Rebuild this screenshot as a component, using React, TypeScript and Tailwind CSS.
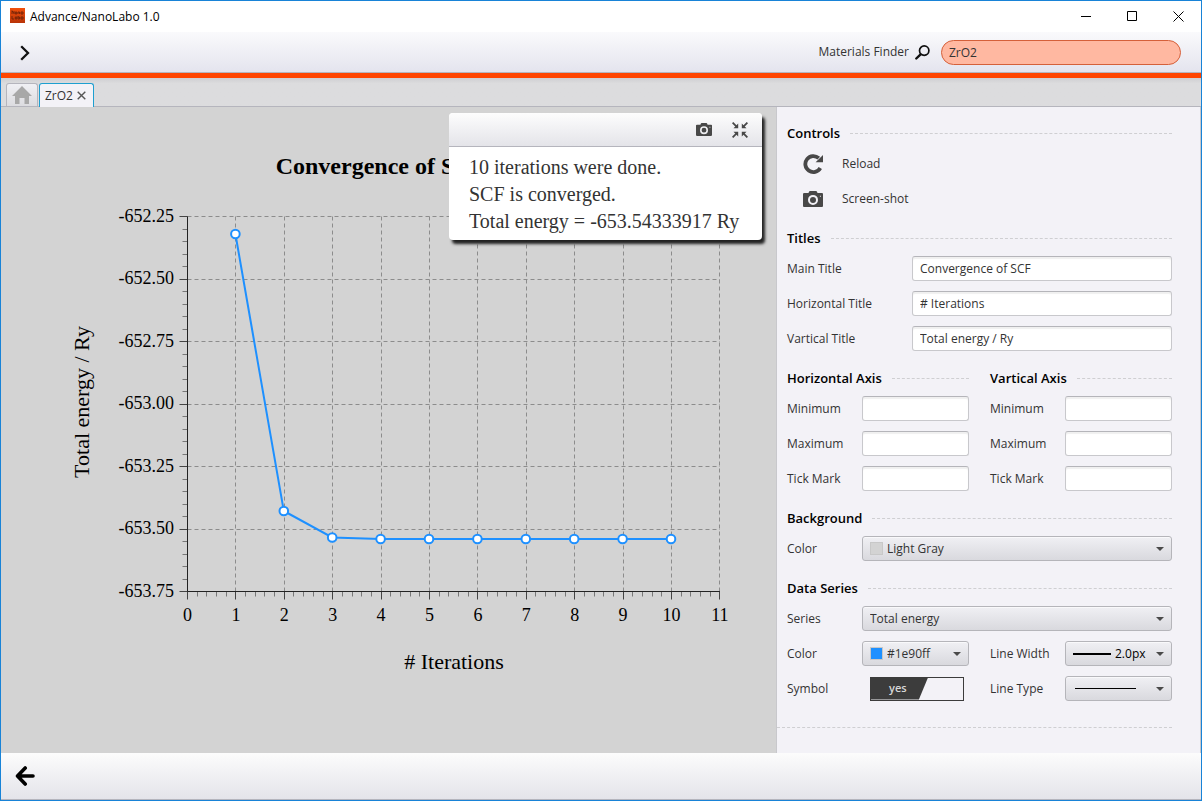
import { type ReactNode, useId } from "react";

const UI = "[font-family:'Open_Sans','Noto_Sans',sans-serif]";

function Camera({ className }: { className: string }) {
  return (
    <svg viewBox="0 0 20 16" className={className} aria-hidden="true">
      <path
        fill="#484848"
        fillRule="evenodd"
        d="M1.200 2h4.300l.5-1.300q.3-.7 1-.7h6q.7 0 1 .7l.5 1.300H19q1 0 1 1v12q0 1-1 1H1q-1 0-1-1V3q0-1 1.200-1zM10 3.900a5 5 0 1 0 0 10a5 5 0 1 0 0-10zM10 5.900a3 3 0 1 1 0 6a3 3 0 1 1 0-6zM16.900 4.700v1h1v-1z"
      />
    </svg>
  );
}

function Heading({ children }: { children: ReactNode }) {
  return (
    <div className="flex h-5 items-center gap-2.5">
      <h2 className="text-[13px] font-semibold leading-5 text-black">{children}</h2>
      <div className="flex-1 border-t border-dashed border-[#cfcfd2]" />
    </div>
  );
}

function Field({ label, value = "", wide = false }: { label: string; value?: string; wide?: boolean }) {
  const id = useId();
  return (
    <div className="flex h-[25px] items-center">
      <label htmlFor={id} className={wide ? "w-[125px] shrink-0" : "w-[75px] shrink-0"}>
        {label}
      </label>
      <input
        id={id}
        defaultValue={value}
        className="h-[25px] min-w-0 flex-1 rounded-[3px] border border-[#c8c8cc] border-t-[#b5b5ba] bg-white px-[7px] shadow-[inset_0_2px_1px_#f0f0f0] outline-none"
      />
    </div>
  );
}

function Choice({
  label,
  value,
  before,
  dark = false,
}: {
  label: string;
  value: string;
  before?: ReactNode;
  dark?: boolean;
}) {
  const id = useId();
  return (
    <div className="flex h-[25px] items-center">
      <label htmlFor={id} className="w-[75px] shrink-0">
        {label}
      </label>
      <div className="flex h-[25px] min-w-0 flex-1 items-center gap-1 rounded-[3px] border border-[#b5b5ba] bg-linear-to-b from-[#f0f0f4] to-[#d9d9de] px-[7px] shadow-[inset_0_1px_0_#f9f9fb]">
        {before}
        <select
          id={id}
          className={`min-w-0 flex-1 appearance-none bg-transparent outline-none ${dark ? "text-black" : "text-[#333]"}`}
        >
          <option value={value}>{value}</option>
        </select>
        <svg viewBox="0 0 8 4" className="h-1 w-2 shrink-0" aria-hidden="true">
          <path d="M0 0h8L4 4z" fill="#4a4a4a" />
        </svg>
      </div>
    </div>
  );
}

const X0 = 186.5;
const Y0 = 484.5;
const STEP_X = 48.4;
const STEP_Y = 62.5;
const POINTS = [127, 404, 430.5, 432, 432, 432, 432, 432, 432, 432];
const Y_LABELS = ["-652.25", "-652.50", "-652.75", "-653.00", "-653.25", "-653.50", "-653.75"];

function Chart() {
  const top = Y0 - STEP_Y * 6;
  const right = X0 + STEP_X * 11;
  const crisp = (v: number) => Math.floor(v) + 0.5;
  const xs = Array.from({ length: 12 }, (_, i) => i);
  return (
    <svg
      viewBox="0 0 775 646"
      className="h-full w-full [font-family:'Liberation_Serif',serif]"
      role="img"
      aria-label="Convergence of SCF"
    >
      <text x="380" y="67" textAnchor="middle" fontSize="24" fontWeight="bold">
        Convergence of SCF
      </text>
      <g stroke="#8c8c8c" strokeDasharray="4 3">
        {xs.slice(1).map((i) => (
          <line key={i} x1={crisp(X0 + STEP_X * i)} x2={crisp(X0 + STEP_X * i)} y1={Y0} y2={top} />
        ))}
        {Y_LABELS.slice(0, 6).map((l, i) => (
          <line key={l} x1={X0} x2={right} y1={crisp(top + STEP_Y * i)} y2={crisp(top + STEP_Y * i)} />
        ))}
      </g>
      <g stroke="#777">
        {Array.from({ length: 55 }, (_, i) => (
          <line
            key={i}
            x1={crisp(X0 + (STEP_X * i) / 5)}
            x2={crisp(X0 + (STEP_X * i) / 5)}
            y1={Y0}
            y2={Y0 + 5}
          />
        ))}
        {Array.from({ length: 30 }, (_, i) => (
          <line
            key={i}
            x1={X0 - 5}
            x2={X0}
            y1={crisp(top + (STEP_Y * i) / 5)}
            y2={crisp(top + (STEP_Y * i) / 5)}
          />
        ))}
      </g>
      <g stroke="#444">
        {xs.map((i) => (
          <line key={i} x1={crisp(X0 + STEP_X * i)} x2={crisp(X0 + STEP_X * i)} y1={Y0} y2={Y0 + 8} />
        ))}
        {Y_LABELS.map((l, i) => (
          <line key={l} x1={X0 - 8} x2={X0} y1={crisp(top + STEP_Y * i)} y2={crisp(top + STEP_Y * i)} />
        ))}
      </g>
      <path d={`M${X0} ${top}V${Y0}H${right}`} fill="none" stroke="#222" />
      <g fontSize="18">
        {xs.map((i) => (
          <text key={i} x={X0 + STEP_X * i} y="514" textAnchor="middle">
            {i}
          </text>
        ))}
        {Y_LABELS.map((l, i) => (
          <text key={l} x="173" y={top + STEP_Y * i + 5} textAnchor="end">
            {l}
          </text>
        ))}
      </g>
      <text x="453" y="562" textAnchor="middle" fontSize="22">
        # Iterations
      </text>
      <text transform="translate(88 295) rotate(-90)" textAnchor="middle" fontSize="22">
        Total energy / Ry
      </text>
      <polyline
        points={POINTS.map((y, i) => `${X0 - 0.5 + STEP_X * (i + 1)},${y}`).join(" ")}
        fill="none"
        stroke="#1e90ff"
        strokeWidth="2"
      />
      {POINTS.map((y, i) => (
        <circle
          key={i}
          cx={X0 - 0.5 + STEP_X * (i + 1)}
          cy={y}
          r="4.3"
          fill="#fff"
          stroke="#1e90ff"
          strokeWidth="2"
        />
      ))}
    </svg>
  );
}

function ResultPopup() {
  return (
    <aside className="absolute right-3.5 top-1.5 min-w-[313px] rounded-[4px] bg-white shadow-[3px_4px_3px_#222]">
      <div className="flex h-[34px] items-center justify-end gap-5 rounded-t-[4px] border-b border-[#b5b5bd] bg-linear-to-b from-[#fdfdfd] to-[#e4e4e9] pr-3.5">
        <button type="button" aria-label="Save picture">
          <Camera className="h-[13px] w-4" />
        </button>
        <button type="button" aria-label="Collapse">
          <svg viewBox="0 0 16 16" className="size-4" aria-hidden="true">
            <path stroke="#484848" strokeWidth="1.8" d="M.6.6l4 4M15.400.6l-4 4M.6 15.400l4-4M15.400 15.400l-4-4" />
            <path
              fill="#484848"
              d="M6.200 1.500v4.700H1.500zM9.800 1.500v4.700h4.700zM6.200 14.500V9.800H1.500zM9.800 14.500V9.800h4.700z"
            />
          </svg>
        </button>
      </div>
      <div className="px-5 pb-[5px] pt-[7px] text-[20px] leading-[27px] text-[#333] [font-family:'Liberation_Serif',serif]">
        <p>10 iterations were done.</p>
        <p>SCF is converged.</p>
        <p>Total energy = -653.54333917 Ry</p>
      </div>
    </aside>
  );
}

function Settings() {
  return (
    <section className="flex w-[425px] shrink-0 flex-col border-x border-[#c8c8cc] bg-[#f3f2f7]">
      <div className="flex flex-col gap-[17px] pl-2.5 pr-7 pt-4">
        <div>
          <Heading>Controls</Heading>
          <div className="flex flex-col items-start gap-2.5 pl-4 pt-2">
            <button type="button" className="flex h-[25px] items-center gap-[19px]">
              <svg viewBox="0 0 20 20" className="size-5" aria-hidden="true">
                <path d="M15.800 4.200A8 8 0 1 0 17.300 14" fill="none" stroke="#484848" strokeWidth="3.800" />
                <path d="M20 1V8.300H12.600z" fill="#484848" />
              </svg>
              Reload
            </button>
            <button type="button" className="flex h-[25px] items-center gap-[19px]">
              <Camera className="h-4 w-5" />
              Screen-shot
            </button>
          </div>
        </div>
        <div>
          <Heading>Titles</Heading>
          <div className="flex flex-col gap-2.5 pt-2">
            <Field wide label="Main Title" value="Convergence of SCF" />
            <Field wide label="Horizontal Title" value="# Iterations" />
            <Field wide label="Vartical Title" value="Total energy / Ry" />
          </div>
        </div>
        <div className="grid grid-cols-2 gap-x-[21px]">
          {["Horizontal Axis", "Vartical Axis"].map((axis) => (
            <div key={axis}>
              <Heading>{axis}</Heading>
              <div className="flex flex-col gap-2.5 pt-2">
                <Field label="Minimum" />
                <Field label="Maximum" />
                <Field label="Tick Mark" />
              </div>
            </div>
          ))}
        </div>
        <div>
          <Heading>Background</Heading>
          <div className="pt-2">
            <Choice
              label="Color"
              value="Light Gray"
              before={<span className="size-[13px] border border-[#c8c8c8] bg-[#d3d3d3]" />}
            />
          </div>
        </div>
        <div>
          <Heading>Data Series</Heading>
          <div className="grid grid-cols-2 gap-x-[21px] gap-y-2.5 pt-2">
            <div className="col-span-2">
              <Choice label="Series" value="Total energy" />
            </div>
            <Choice
              label="Color"
              value="#1e90ff"
              before={<span className="size-[13px] shrink-0 border border-[#c8c8c8] bg-[#1e90ff]" />}
            />
            <Choice
              dark
              label="Line Width"
              value="2.0px"
              before={<span className="h-0.5 w-[38px] shrink-0 bg-black" />}
            />
            <div className="flex h-[25px] items-center">
              <label htmlFor="symbol" className="w-[83px] shrink-0">
                Symbol
              </label>
              <button
                id="symbol"
                type="button"
                role="switch"
                aria-checked="true"
                className="flex h-6 w-[94px] border border-[#3c3c3c]"
              >
                <span className="flex h-full w-[57px] items-center bg-[#3c3c3c] pl-[18px] text-[11px] font-semibold text-[#d8d8d8] [clip-path:polygon(0_0,100%_0,84%_100%,0_100%)]">
                  yes
                </span>
              </button>
            </div>
            <Choice
              label="Line Type"
              value=""
              before={<span className="ml-0.5 h-px w-[61px] shrink-0 bg-black" />}
            />
          </div>
        </div>
      </div>
      <div className="mr-7 mt-[26px] border-t border-dashed border-[#cfcfd2]" />
    </section>
  );
}

export default function App() {
  return (
    <div className={`flex min-h-screen flex-col border border-[#1883d7] bg-white text-[12px] text-[#333] ${UI}`}>
      <header className="flex h-[31px] items-center">
        <svg viewBox="0 0 15 15" className="mb-0.5 ml-[9px] size-[15px]" aria-hidden="true">
          <defs>
            <linearGradient id="logo" x2="0" y2="1">
              <stop stopColor="#f0500c" />
              <stop offset="1" stopColor="#b93408" />
            </linearGradient>
          </defs>
          <path fill="url(#logo)" d="M0 0h15v15H0z" />
          <path
            fill="none"
            stroke="#6e2208"
            strokeWidth=".9"
            d="M2 6V2.700l2 3V3M5.300 4h1.500v2H5.300zM8 6V4h1.500v2M11 4h2v2h-2zM2 8v3h2M5.300 9h1.500v2H5.300zM8 8v3h1.500V9H8M11 9h2v2h-2z"
          />
        </svg>
        <h1 className="ml-[5px] text-[12px] leading-4 text-black">Advance/NanoLabo 1.0</h1>
        <div className="ml-auto flex items-center gap-[35px] pr-[17px]">
          <button type="button" aria-label="Minimize">
            <svg className="size-[11px]" viewBox="0 0 11 11" aria-hidden="true">
              <path d="M0 5.500h10" stroke="#000" />
            </svg>
          </button>
          <button type="button" aria-label="Maximize">
            <svg className="size-[11px]" viewBox="0 0 11 11" aria-hidden="true">
              <path d="M.5.5h9v9h-9z" fill="none" stroke="#000" />
            </svg>
          </button>
          <button type="button" aria-label="Close">
            <svg className="size-[11px]" viewBox="0 0 11 11" aria-hidden="true">
              <path d="M.5.5l10 10M10.500.5l-10 10" stroke="#000" />
            </svg>
          </button>
        </div>
      </header>

      <div className="flex h-[41px] items-center border-b border-[#b5b5bd] bg-linear-to-b from-[#fafafc] to-[#e4e4ee]">
        <button type="button" aria-label="Open menu" className="ml-[19px] mt-0.5">
          <svg viewBox="0 0 10 16" className="h-4 w-2.5" aria-hidden="true">
            <path d="M1.200 1.200L8 8l-6.800 6.800" fill="none" stroke="#111" strokeWidth="2.300" />
          </svg>
        </button>
        <label htmlFor="finder" className="ml-auto flex items-center gap-1.5 font-medium">
          Materials Finder
          <svg viewBox="0 0 15 15" className="size-[15px]" aria-hidden="true">
            <circle cx="9.200" cy="5.600" r="4.700" fill="none" stroke="#111" strokeWidth="1.700" />
            <path d="M5.600 9.400L1.300 13.500" stroke="#111" strokeWidth="2.400" strokeLinecap="round" />
          </svg>
        </label>
        <input
          id="finder"
          defaultValue="ZrO2"
          className="ml-[11px] mr-5 h-[25px] w-60 rounded-full border border-[#d5603a] bg-[#ffb8a1] px-[7px] outline-none"
        />
      </div>
      <div className="h-[5px] bg-[#ff4500]" />

      <nav className="flex h-[29px] items-end gap-px border-b border-[#b5b5bd] bg-linear-to-b from-[#cfcfd2] via-[#dcdcde] via-20% to-[#dcdcde] pl-[5px]">
        <button
          type="button"
          aria-label="Home"
          className="flex h-[23px] w-8 items-center justify-center rounded-t-[3px] border border-b-0 border-[#b5b5bd] bg-linear-to-b from-[#f0f0f4] to-[#dcdce0]"
        >
          <svg viewBox="0 0 20 18" className="h-[18px] w-5" aria-hidden="true">
            <path d="M10 0L20 10h-3v8h-4.500v-6h-5v6H3v-8H0z" fill="#a8a8a8" />
          </svg>
        </button>
        <div className="-mb-px flex h-6 items-center gap-1 rounded-t-[3px] border border-b-0 border-[#1e9fd0] bg-[#f3f2f7] px-[5px]">
          <button type="button">ZrO2</button>
          <button type="button" aria-label="Close tab" className="mr-0.5">
            <svg viewBox="0 0 9 9" className="size-[9px]" aria-hidden="true">
              <path d="M.7.7l7.600 7.600M8.300.7L.7 8.300" stroke="#555" strokeWidth="1.400" />
            </svg>
          </button>
        </div>
      </nav>

      <main className="flex min-h-[646px] flex-1">
        <div className="relative min-w-0 flex-1 bg-[#d3d3d3]">
          <Chart />
          <ResultPopup />
        </div>
        <Settings />
      </main>

      <footer className="flex h-[47px] items-center border-b border-[#b5b5bd] bg-linear-to-b from-[#fcfcfc] to-[#e4e4ea] pl-3.5">
        <button type="button" aria-label="Back">
          <svg viewBox="0 0 20 20" className="size-5" aria-hidden="true">
            <path
              d="M10.200 2L2.500 10l7.700 8M3.500 10H18"
              fill="none"
              stroke="#000"
              strokeWidth="3.600"
              strokeLinecap="round"
              strokeLinejoin="round"
            />
          </svg>
        </button>
      </footer>
    </div>
  );
}
